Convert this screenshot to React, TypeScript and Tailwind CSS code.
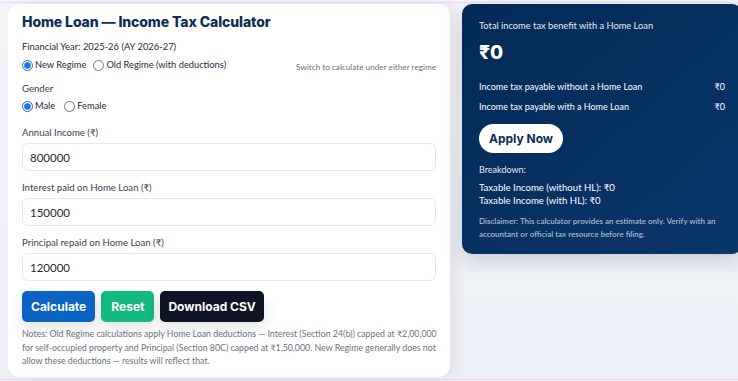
import React from "react";

const body = { fontFamily: 'Lato, "Noto Sans", sans-serif' };
const head = { fontFamily: 'Inter, "Noto Sans", sans-serif' };

function Radio({ name, label, checked }: { name: string; label: string; checked?: boolean }) {
  return (
    <label className="flex items-center gap-[2px] text-[9.3px] leading-[14px] text-[#1f2937]">
      <input
        type="radio"
        name={name}
        defaultChecked={checked}
        className="m-0 h-[11px] w-[11px] accent-[#1a73e8]"
      />
      {label}
    </label>
  );
}

function Field({ label, value, first }: { label: string; value: string; first?: boolean }) {
  return (
    <div className={first ? "mt-[13px]" : "mt-[10px]"}>
      <div className="text-[9.6px] leading-[14px] text-[#374151]">{label}</div>
      <input
        defaultValue={value}
        className="mt-[3px] h-[28px] w-full rounded-[6px] border border-[#e3e8f0] bg-white px-[7px] text-[11.5px] text-[#1f2937] outline-none"
      />
    </div>
  );
}

export default function App() {
  return (
    <div className="h-[381px] w-[738px] overflow-hidden bg-gradient-to-b from-[#f2f4f8] to-[#eceff5] pt-[2px]" style={body}>
      <div className="h-[378px] border-y border-[#f3d3f7] pt-[1px]">
        <div className="grid grid-cols-[442px_280px] items-start gap-3 px-2">
          {/* left card */}
          <div className="h-[373px] rounded-[12px] bg-white px-[14px] pt-[7px] shadow-[6px_0_12px_rgba(15,23,42,0.06)]">
            <h1 className="text-[14px] font-extrabold leading-[22px] tracking-[-0.1px] text-[#0b2d57]" style={head}>
              Home Loan — Income Tax Calculator
            </h1>
            <div className="mt-[7px] text-[9.4px] leading-[14px] text-[#1f2937]">Financial Year: 2025-26 (AY 2026-27)</div>
            <div className="mt-[3px] flex items-center justify-between">
              <div className="flex items-center gap-[7px]">
                <Radio name="regime" label="New Regime" checked />
                <Radio name="regime" label="Old Regime (with deductions)" />
              </div>
              <div className="mt-[4px] text-[8.2px] text-[#6b7280]">Switch to calculate under either regime</div>
            </div>
            <div className="mt-[9px] text-[9.6px] leading-[14px] text-[#374151]">Gender</div>
            <div className="mt-[3px] flex items-center gap-[9px]">
              <Radio name="gender" label="Male" checked />
              <Radio name="gender" label="Female" />
            </div>
            <Field label="Annual Income (₹)" value="800000" first />
            <Field label="Interest paid on Home Loan (₹)" value="150000" />
            <Field label="Principal repaid on Home Loan (₹)" value="120000" />
            <div className="mt-[10px] flex gap-[6px]" style={head}>
              <button className="h-[31px] rounded-[5px] bg-[#0b63c4] px-[9px] text-[12px] font-bold text-white shadow-[0_6px_14px_rgba(15,23,42,0.12)]">
                Calculate
              </button>
              <button className="h-[31px] rounded-[5px] bg-[#12b981] px-[10px] text-[12px] font-bold text-white shadow-[0_6px_14px_rgba(15,23,42,0.12)]">
                Reset
              </button>
              <button className="h-[31px] rounded-[5px] bg-[#0f1424] px-[8px] text-[12px] font-bold text-white shadow-[0_6px_14px_rgba(15,23,42,0.12)]">
                Download CSV
              </button>
            </div>
            <p className="mt-[5px] whitespace-nowrap text-[8.8px] leading-[13.5px] text-[#6b7280]">
              Notes: Old Regime calculations apply Home Loan deductions — Interest (Section 24(b)) capped at ₹2,00,000
              <br />
              for self-occupied property and Principal (Section 80C) capped at ₹1,50,000. New Regime generally does not
              <br />
              allow these deductions — results will reflect that.
            </p>
          </div>

          {/* right card */}
          <div className="h-[250px] rounded-[10px] bg-gradient-to-br from-[#032a55] to-[#0b366b] px-[17px] pt-[15px] text-white shadow-[0_8px_18px_rgba(15,23,42,0.15)]">
            <div className="text-[9.3px] leading-[13px] text-[#e5ebf3]">Total income tax benefit with a Home Loan</div>
            <div className="mt-[9px] text-[19px] font-extrabold leading-[24px]" style={head}>₹0</div>
            <div className="mt-[15px] flex justify-between text-[9px] leading-[13px]">
              <span>Income tax payable without a Home Loan</span>
              <span>₹0</span>
            </div>
            <div className="mt-[7px] flex justify-between text-[9px] leading-[13px]">
              <span>Income tax payable with a Home Loan</span>
              <span>₹0</span>
            </div>
            <button
              className="mt-[11px] h-[29px] rounded-full bg-white px-[10px] text-[12px] font-bold text-[#0b2d57]"
              style={head}
            >
              Apply Now
            </button>
            <div className="mt-[11px] text-[9px] leading-[12px] text-[#e5ebf3]">Breakdown:</div>
            <div className="mt-[5px] text-[9.6px] leading-[13px]">Taxable Income (without HL): ₹0</div>
            <div className="text-[9.6px] leading-[13px]">Taxable Income (with HL): ₹0</div>
            <p className="mt-[8px] pr-[6px] text-[8px] font-semibold leading-[13px] text-[#a9b9cf]">
              Disclaimer: This calculator provides an estimate only. Verify with an accountant or official tax resource
              before filing.
            </p>
          </div>
        </div>
      </div>
    </div>
  );
}
